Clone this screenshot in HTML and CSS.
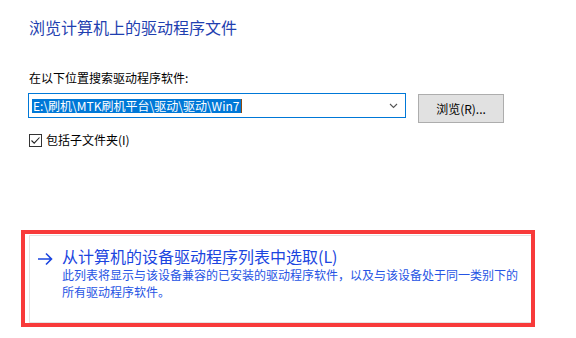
FILE: index.html
```html
<!DOCTYPE html>
<html lang="zh-CN">
<head>
    <meta charset="UTF-8">
    <title>浏览计算机上的驱动程序文件</title>
    <link rel="stylesheet" href="styles.css">
</head>
<body>
    <div class="page">
        <h1 class="main-title">浏览计算机上的驱动程序文件</h1>
        <div class="search-label">在以下位置搜索驱动程序软件:</div>
        <div class="path-row">
            <div class="combo">
                <span class="combo-text"><span class="selected">E:\刷机\MTK刷机平台\驱动\驱动\Win7</span><span class="caret"></span></span>
                <svg class="combo-arrow" width="9" height="6" viewBox="0 0 9 6"><path d="M1 1 L4.5 4.5 L8 1" fill="none" stroke="#555" stroke-width="1.1"/></svg>
            </div>
            <button class="browse-button">浏览(R)...</button>
        </div>
        <label class="check-row">
            <svg class="check-box" width="13" height="13" viewBox="0 0 13 13">
                <rect x="0.5" y="0.5" width="12" height="12" fill="#fff" stroke="#333"/>
                <path d="M2.5 6.5 L5.2 9.2 L10.5 3.5" fill="none" stroke="#222" stroke-width="1.1"/>
            </svg>
            包括子文件夹(I)
        </label>
        <div class="highlight-box">
            <div class="command-link">
                <svg class="command-arrow" width="16" height="14" viewBox="0 0 16 14">
                    <path d="M1 7 H14.5 M9 1.5 L14.5 7 L9 12.5" fill="none" stroke="#1b45e0" stroke-width="1.6"/>
                </svg>
                <div class="command-body">
                    <div class="command-title">从计算机的设备驱动程序列表中选取(L)</div>
                    <div class="command-desc">此列表将显示与该设备兼容的已安装的驱动程序软件，以及与该设备处于同一类别下的<br>所有驱动程序软件。</div>
                </div>
            </div>
        </div>
    </div>
</body>
</html>
```

FILE: styles.css
```css
body {
    margin: 0;
    background: #fff;
    font-family: "Noto Sans CJK SC", "Noto Sans", sans-serif;
    color: #000;
}
.page {
    padding-top: 16px;
}
.main-title {
    margin: 0 0 0 29px;
    font-size: 16px;
    line-height: 22px;
    font-weight: normal;
    color: #1f3fb0;
}
.search-label {
    margin: 32px 0 0 29px;
    font-size: 12px;
    line-height: 16px;
}
.path-row {
    display: flex;
    align-items: flex-start;
    margin: 7px 0 0 28px;
}
.combo {
    width: 378px;
    height: 25px;
    box-sizing: border-box;
    border: 1px solid #0078d7;
    display: flex;
    align-items: center;
    justify-content: space-between;
    padding: 0 7px 0 3px;
}
.combo-text {
    display: flex;
    align-items: center;
}
.selected {
    display: inline-block;
    height: 14px;
    line-height: 14px;
    font-size: 12px;
    background: #0078d7;
    color: #fff;
    padding: 0 2px 0 1px;
}
.caret {
    display: inline-block;
    width: 1px;
    height: 14px;
    background: #8a4a10;
}
.combo-arrow {
    display: block;
}
.browse-button {
    margin: 1px 0 0 12px;
    width: 86px;
    height: 29px;
    background: #e1e1e1;
    border: 1px solid #adadad;
    font-family: inherit;
    font-size: 12px;
    color: #000;
    padding: 0;
}
.check-row {
    display: flex;
    align-items: center;
    gap: 4px;
    margin: 9px 0 0 29px;
    font-size: 12px;
    line-height: 16px;
}
.check-box {
    display: block;
}
.highlight-box {
    margin: 82px 0 0 21px;
    width: 514px;
    height: 97px;
    box-sizing: border-box;
    border: 4px solid #f83a3a;
    padding: 1px 0 0 4px;
}
.command-link {
    height: 88px;
    box-sizing: border-box;
    border: 1px solid #e3e3e3;
    border-right: none;
    display: flex;
    align-items: flex-start;
    padding: 10px 0 0 7px;
}
.command-arrow {
    display: block;
    margin-top: 6px;
}
.command-body {
    margin-left: 9px;
}
.command-title {
    font-size: 16px;
    line-height: 20px;
    color: #1b45e0;
}
.command-desc {
    font-size: 12px;
    line-height: 17px;
    color: #2654e4;
}
```
